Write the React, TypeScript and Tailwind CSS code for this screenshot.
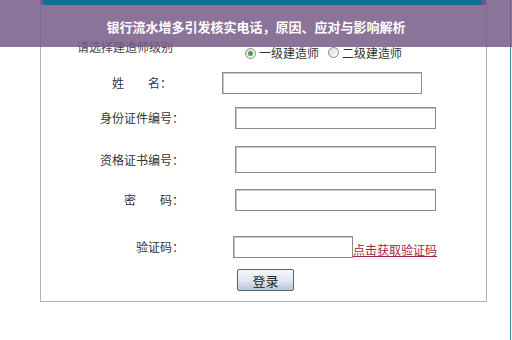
import React from "react";

const cjk = { fontFamily: '"Noto Sans CJK SC", "Noto Sans", sans-serif' };

function Radio({ checked }: { checked?: boolean }) {
  return (
    <span className="relative inline-flex h-[11px] w-[11px] items-center justify-center rounded-full border border-[#8a8a8a] bg-gradient-to-br from-[#dcdcdc] to-white">
      {checked && <span className="h-[5px] w-[5px] rounded-full bg-[#3fa43f]" />}
    </span>
  );
}

function Input({ w, h = 22 }: { w: number; h?: number }) {
  return (
    <div
      className="border border-[#8c8c8c] bg-white shadow-[inset_1px_1px_0_#c8c8c8]"
      style={{ width: w, height: h }}
    />
  );
}

export default function App() {
  return (
    <div className="relative h-[340px] w-[512px] overflow-hidden bg-white text-[#333]" style={cjk}>
      <div className="flex h-full">
        <div className="ml-[40px] flex h-[302px] w-[447px] flex-col border-x border-b border-[#b4b4b4]">
          <div className="h-[5px] bg-[#136f96]" />
          {/* row 1 */}
          <div className="mt-[35px] flex h-[22px] items-start">
            <span className="ml-[36px] w-[168px] text-[12px] leading-[14px] text-[#444]">请选择建造师级别</span>
            <div className="mt-[6px] flex items-center text-[12px] leading-[14px] text-[#333]">
              <Radio checked />
              <span className="ml-[3px]">一级建造师</span>
              <span className="ml-[9px]"><Radio /></span>
              <span className="ml-[3px]">二级建造师</span>
            </div>
          </div>
          {/* row 2 */}
          <div className="mt-[10px] flex h-[22px] items-center">
            <span className="w-[131px] text-right text-[12px]">姓　　名：</span>
            <div className="ml-[50px]"><Input w={200} /></div>
          </div>
          {/* row 3 */}
          <div className="mt-[13px] flex h-[22px] items-center">
            <span className="w-[143px] text-right text-[12px]">身份证件编号：</span>
            <div className="ml-[51px]"><Input w={201} /></div>
          </div>
          {/* row 4 */}
          <div className="mt-[17px] flex h-[27px] items-center">
            <span className="w-[143px] text-right text-[12px]">资格证书编号：</span>
            <div className="ml-[51px]"><Input w={201} h={27} /></div>
          </div>
          {/* row 5 */}
          <div className="mt-[16px] flex h-[22px] items-center">
            <span className="w-[143px] text-right text-[12px]">密　　码：</span>
            <div className="ml-[51px]"><Input w={201} /></div>
          </div>
          {/* row 6 */}
          <div className="mt-[25px] flex h-[22px] items-center">
            <span className="w-[143px] text-right text-[12px]">验证码：</span>
            <div className="ml-[49px]"><Input w={120} /></div>
            <span className="mt-[6px] text-[12px] text-[#a3263f] underline">点击获取验证码</span>
          </div>
          {/* row 7 */}
          <div className="mt-[11px] flex h-[22px] items-center">
            <button className="ml-[196px] flex h-[22px] w-[57px] items-center justify-center rounded-[2px] border border-[#5a6470] bg-gradient-to-b from-[#f4f7fb] via-[#e3e9f1] to-[#b8c6d8] text-[13px] leading-none text-[#222]">
              登录
            </button>
          </div>
        </div>
        <div className="flex-1" />
        <div className="mr-[1px] w-px bg-[#3f8a97]" />
      </div>
      <div className="absolute left-0 top-0 flex h-[47px] w-full items-center justify-center bg-[rgba(120,90,135,0.85)]">
        <span className="mt-[6px] text-[13px] font-bold text-white" style={cjk}>
          银行流水增多引发核实电话，原因、应对与影响解析
        </span>
      </div>
      <div className="absolute left-[43px] top-0 h-[5px] w-[439px] bg-[#136f96]" />
    </div>
  );
}
